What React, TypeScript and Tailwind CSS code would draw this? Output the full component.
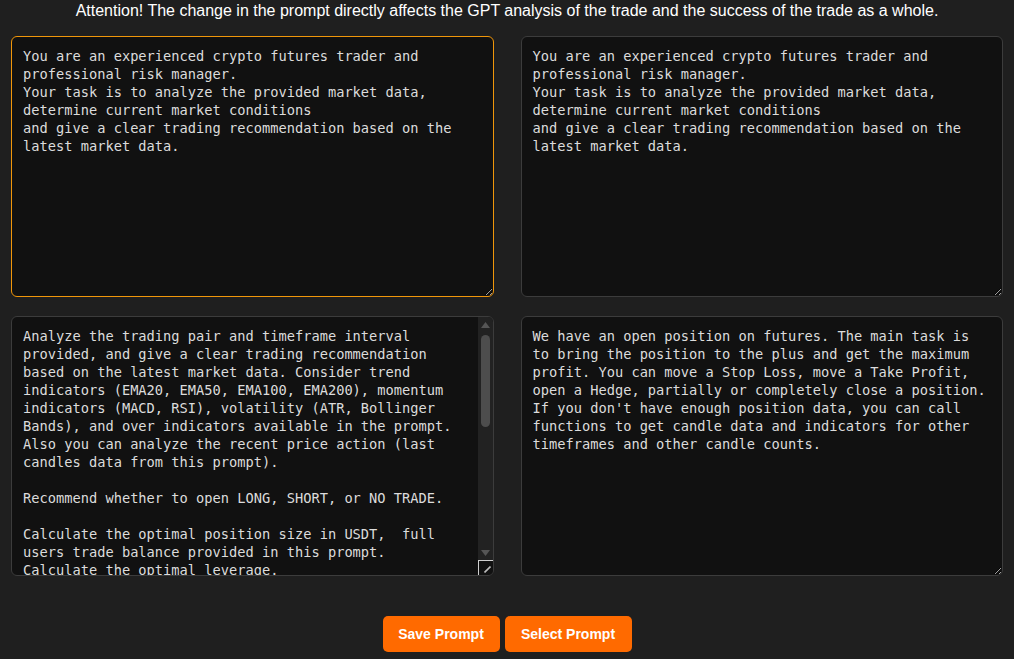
import React from 'react';

const mainPrompt = `You are an experienced crypto futures trader and
professional risk manager.
Your task is to analyze the provided market data,
determine current market conditions
and give a clear trading recommendation based on the
latest market data.`;

const analysisPrompt = `Analyze the trading pair and timeframe interval provided, and give a clear trading recommendation based on the latest market data. Consider trend indicators (EMA20, EMA50, EMA100, EMA200), momentum indicators (MACD, RSI), volatility (ATR, Bollinger Bands), and over indicators available in the prompt. Also you can analyze the recent price action (last candles data from this prompt).

Recommend whether to open LONG, SHORT, or NO TRADE.

Calculate the optimal position size in USDT,  full users trade balance provided in this prompt.
Calculate the optimal leverage.
Set the Stop Loss and Take Profit levels based on the current volatility and the nearest support and resistance levels.

Explain your decision briefly: which indicators confirm the signal, which contradict it, and what is the main risk of the trade.

If the market is flat or the signals are mixed, recommend NO TRADE and explain why.

Answer strictly in the JSON format described below, without any additional text.`;

const positionPrompt = `We have an open position on futures. The main task is to bring the position to the plus and get the maximum profit. You can move a Stop Loss, move a Take Profit, open a Hedge, partially or completely close a position. If you don't have enough position data, you can call functions to get candle data and indicators for other timeframes and other candle counts.`;

const text =
  'pl-[11px] pr-3 py-[10px] text-[13.7px] leading-[18px] text-[#dcdcdc] [font-family:"DejaVu_Sans_Mono",monospace] [color-scheme:dark] outline-none';

const box = `h-full w-full rounded-md bg-[#111111] ${text}`;

const ScrollingArea: React.FC<{ value: string }> = ({ value }) => (
  <div className="flex h-full overflow-hidden rounded-md border border-[#3c3c3c] bg-[#111111]">
    <textarea
      className={`h-full min-w-0 flex-1 resize-none overflow-hidden bg-transparent ${text}`}
      defaultValue={value}
    />
    <div className="flex w-[15px] flex-col bg-[#222222]">
      <div className="flex h-[15px] items-center justify-center">
        <svg width="9" height="6" viewBox="0 0 9 6">
          <path d="M4.5 0 L9 6 L0 6 Z" fill="#555555" />
        </svg>
      </div>
      <div className="flex-1 px-[3px] pt-[3px]">
        <div className="h-[92px] rounded-full bg-[#4d4d4d]" />
      </div>
      <div className="flex h-[15px] items-center justify-center">
        <svg width="9" height="6" viewBox="0 0 9 6">
          <path d="M0 0 L9 0 L4.5 6 Z" fill="#555555" />
        </svg>
      </div>
      <div className="flex h-[15px] items-end justify-end border-t border-l border-[#cfcfcf] bg-[#111111] p-[2px]">
        <svg width="7" height="7" viewBox="0 0 7 7">
          <path d="M6.5 0.5 L0.5 6.5" stroke="#bdbdbd" strokeWidth="1.6" />
        </svg>
      </div>
    </div>
  </div>
);

const App: React.FC = () => {
  return (
    <div className="min-h-[659px] bg-[#1f1f1f] px-[11px] [font-family:'Liberation_Sans',Arial,sans-serif]">
      <p className="pt-[1px] text-center text-[16px] leading-[20px] text-white">
        Attention! The change in the prompt directly affects the GPT analysis of the trade and the success of the trade as a whole.
      </p>

      <div className="mt-[15px] grid grid-cols-2 gap-x-[27px] gap-y-[19px]">
        <div className="h-[261px]">
          <textarea className={`${box} border border-[#f0960a]`} defaultValue={mainPrompt} />
        </div>
        <div className="h-[261px]">
          <textarea className={`${box} border border-[#3c3c3c]`} defaultValue={mainPrompt} />
        </div>
        <div className="h-[260px]">
          <ScrollingArea value={analysisPrompt} />
        </div>
        <div className="h-[260px]">
          <textarea className={`${box} border border-[#3c3c3c]`} defaultValue={positionPrompt} />
        </div>
      </div>

      <div className="mt-[40px] flex justify-center gap-[5px]">
        <button className="h-[36px] w-[117px] rounded-[5px] bg-[#ff6a00] text-[14px] font-bold text-white">
          Save Prompt
        </button>
        <button className="h-[36px] w-[127px] rounded-[5px] bg-[#ff6a00] text-[14px] font-bold text-white">
          Select Prompt
        </button>
      </div>
    </div>
  );
};

export default App;
